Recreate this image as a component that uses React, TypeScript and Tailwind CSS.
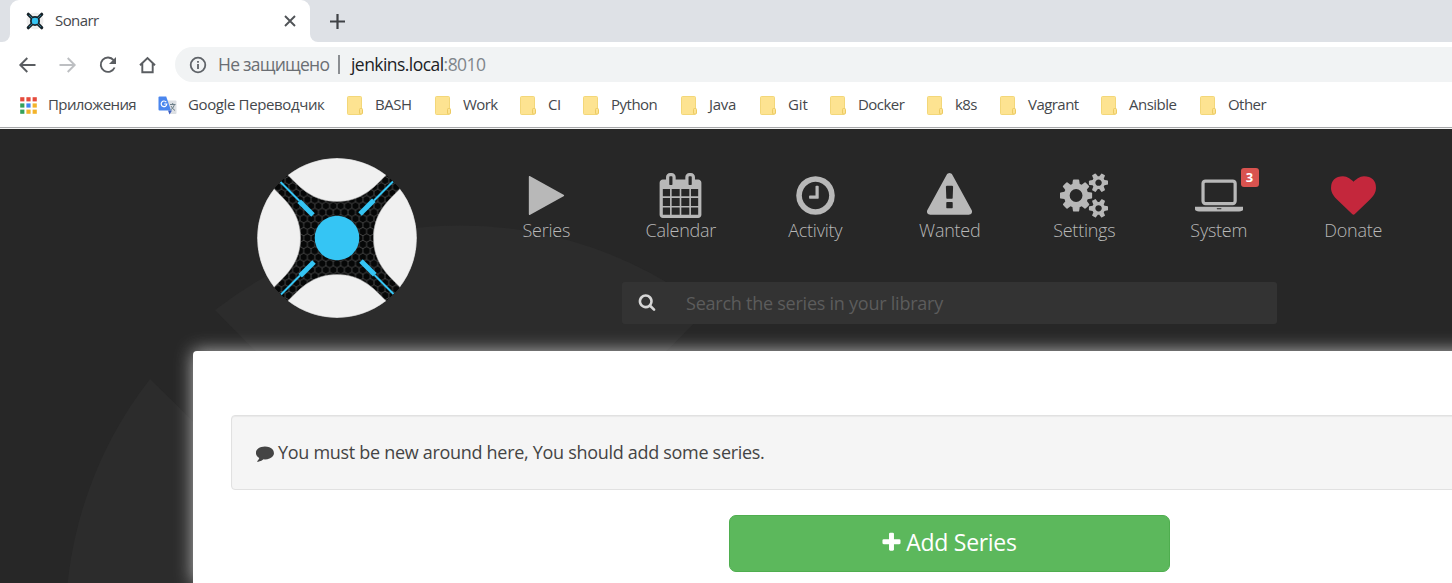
import React from "react";

const PATHS = {
  play: "M1576 927l-1328 738q-23 13-39.5 3t-16.5-36v-1472q0-26 16.5-36t39.5 3l1328 738q23 13 23 31t-23 31z",
  calendar:
    "M192 1664h288v-288h-288v288zm352 0h320v-288h-320v288zm-352-352h288v-320h-288v320zm352 0h320v-320h-320v320zm-352-384h288v-288h-288v288zm736 736h320v-288h-320v288zm-384-736h320v-288h-320v288zm768 736h288v-288h-288v288zm-384-352h320v-320h-320v320zm-352-864v-288q0-13-9.5-22.5t-22.5-9.5h-64q-13 0-22.5 9.5t-9.5 22.5v288q0 13 9.5 22.5t22.5 9.5h64q13 0 22.5-9.5t9.5-22.5zm736 864h288v-320h-288v320zm-384-384h320v-288h-320v288zm384 0h288v-288h-288v288zm32-480v-288q0-13-9.5-22.5t-22.5-9.5h-64q-13 0-22.5 9.5t-9.5 22.5v288q0 13 9.5 22.5t22.5 9.5h64q13 0 22.5-9.5t9.5-22.5zm384-64v1280q0 52-38 90t-90 38h-1408q-52 0-90-38t-38-90v-1280q0-52 38-90t90-38h128v-96q0-66 47-113t113-47h64q66 0 113 47t47 113v96h384v-96q0-66 47-113t113-47h64q66 0 113 47t47 113v96h128q52 0 90 38t38 90z",
  clock:
    "M1024 544v448q0 14-9 23t-23 9h-320q-14 0-23-9t-9-23v-64q0-14 9-23t23-9h224v-352q0-14 9-23t23-9h64q14 0 23 9t9 23zm416 352q0-148-73-273t-198-198-273-73-273 73-198 198-73 273 73 273 198 198 273 73 273-73 198-198 73-273zm224 0q0 209-103 385.5t-279.5 279.5-385.5 103-385.5-103-279.5-279.5-103-385.5 103-385.5 279.5-279.5 385.5-103 385.5 103 279.5 279.5 103 385.5z",
  warning:
    "M1024 1375v-190q0-14-9.5-23.5t-22.5-9.5h-192q-13 0-22.5 9.5t-9.5 23.5v190q0 14 9.5 23.5t22.5 9.5h192q13 0 22.5-9.5t9.5-23.5zm-2-374l18-459q0-12-10-19-13-11-24-11h-220q-11 0-24 11-10 7-10 21l17 457q0 10 10 16.5t24 6.5h185q14 0 23.5-6.5t10.5-16.5zm-14-934l768 1408q35 63-2 126-17 29-46.5 46t-63.5 17h-1536q-34 0-63.5-17t-46.5-46q-37-63-2-126l768-1408q17-31 47-49t65-18 65 18 47 49z",
  cogs:
    "M896 896q0-106-75-181t-181-75-181 75-75 181 75 181 181 75 181-75 75-181zm768 512q0-52-38-90t-90-38-90 38-38 90q0 53 37.5 90.5t90.5 37.5 90.5-37.5 37.5-90.5zm0-1024q0-52-38-90t-90-38-90 38-38 90q0 53 37.5 90.5t90.5 37.5 90.5-37.5 37.5-90.5zm-384 421v185q0 10-7 19.5t-16 10.5l-155 24q-11 35-32 76 34 48 90 115 7 11 7 20 0 12-7 19-23 30-82.5 89.5t-78.5 59.5q-11 0-21-7l-115-90q-37 19-77 31-11 108-23 155-7 24-30 24h-186q-11 0-20-7.5t-10-17.5l-23-153q-34-10-75-31l-118 89q-7 7-20 7-11 0-21-8-144-133-144-160 0-9 7-19 10-14 41-53t47-61q-23-44-35-82l-152-24q-10-1-17-9.5t-7-19.5v-185q0-10 7-19.5t16-10.5l155-24q11-35 32-76-34-48-90-115-7-11-7-20 0-12 7-20 22-30 82-89t79-59q11 0 21 7l115 90q34-18 77-32 11-108 23-154 7-24 30-24h186q11 0 20 7.5t10 17.5l23 153q34 10 75 31l118-89q8-7 20-7 11 0 21 8 144 133 144 160 0 8-7 19-12 16-42 54t-45 60q23 48 34 82l152 23q10 2 17 10.5t7 19.5zm640 533v140q0 16-149 31-12 27-30 52 51 113 51 138 0 4-4 7-122 71-124 71-8 0-46-47t-52-68q-20 2-30 2t-30-2q-14 21-52 68t-46 47q-2 0-124-71-4-3-4-7 0-25 51-138-18-25-30-52-149-15-149-31v-140q0-16 149-31 13-29 30-52-51-113-51-138 0-4 4-7 4-2 35-20t59-34 30-16q8 0 46 46.5t52 67.5q20-2 30-2t30 2q51-71 92-112l6-2q4 0 124 70 4 3 4 7 0 25-51 138 17 23 30 52 149 15 149 31zm0-1024v140q0 16-149 31-12 27-30 52 51 113 51 138 0 4-4 7-122 71-124 71-8 0-46-47t-52-68q-20 2-30 2t-30-2q-14 21-52 68t-46 47q-2 0-124-71-4-3-4-7 0-25 51-138-18-25-30-52-149-15-149-31v-140q0-16 149-31 13-29 30-52-51-113-51-138 0-4 4-7 4-2 35-20t59-34 30-16q8 0 46 46.5t52 67.5q20-2 30-2t30 2q51-71 92-112l6-2q4 0 124 70 4 3 4 7 0 25-51 138 17 23 30 52 149 15 149 31z",
  laptop:
    "M416 1280q-66 0-113-47t-47-113v-704q0-66 47-113t113-47h1088q66 0 113 47t47 113v704q0 66-47 113t-113 47h-1088zm-32-864v704q0 13 9.5 22.5t22.5 9.5h1088q13 0 22.5-9.5t9.5-22.5v-704q0-13-9.5-22.5t-22.5-9.5h-1088q-13 0-22.5 9.5t-9.5 22.5zm1376 928h160v96q0 40-47 68t-113 28h-1600q-66 0-113-28t-47-68v-96h1760zm-720 96q16 0 16-16t-16-16h-160q-16 0-16 16t16 16h160z",
  heart:
    "M896 1664q-26 0-44-18l-624-602q-10-8-27.5-26t-55.5-65.5-68-97.5-53.5-121-23.5-138q0-220 127-344t351-124q62 0 126.5 21.5t120 58 95.5 68.5 76 68q36-36 76-68t95.5-68.5 120-58 126.5-21.5q224 0 351 124t127 344q0 221-229 450l-623 600q-18 18-44 18z",
  comment:
    "M1792 896q0 174-120 321.5t-326 233-450 85.5q-70 0-145-8-198 175-460 225-49 14-128 24-17 2-30.5-9t-17.5-29v-1q-3-4-.5-12t2-10 4.5-9.5l6-9 7-8.5 8-9q8-9 31-34.5t34.5-38 31-39.5 32.5-51 27-59 26-76q-157-89-247.5-220t-90.5-281q0-130 71-248.5t191-204.5 286-136.5 348-50.5q244 0 450 85.5t326 233 120 321.5z",
  plus: "M1600 736v192q0 40-28 68t-68 28h-416v416q0 40-28 68t-68 28h-192q-40 0-68-28t-28-68v-416h-416q-40 0-68-28t-28-68v-192q0-40 28-68t68-28h416v-416q0-40 28-68t68-28h192q40 0 68 28t28 68v416h416q40 0 68 28t28 68z",
  search:
    "M1216 832q0-185-131.5-316.5t-316.5-131.5-316.5 131.5-131.5 316.5 131.5 316.5 316.5 131.5 316.5-131.5 131.5-316.5zm512 832q0 52-38 90t-90 38q-54 0-90-38l-343-342q-179 124-399 124-143 0-273.5-55.5t-225-150-150-225-55.5-273.5 55.5-273.5 150-225 225-150 273.5-55.5 273.5 55.5 225 150 150 225 55.5 273.5q0 220-124 399l343 343q37 37 37 90z",
};

type IconName = keyof typeof PATHS;

function Icon({ name, className, wide = false }: { name: IconName; className: string; wide?: boolean }) {
  return (
    <svg viewBox={wide ? "0 0 1920 1792" : "0 0 1792 1792"} fill="currentColor" className={className}>
      <path d={PATHS[name]} />
    </svg>
  );
}

const LENS = "M-49.2 -63C-36 -49.5 -24 -36.5 0 -36.5C24 -36.5 36 -49.5 49.2 -63A80 80 0 0 0 -49.2 -63Z";
const TURNS = [0, 90, 180, 270];

function Logo() {
  return (
    <svg viewBox="-80 -80 160 160" className="h-40 w-40">
      <defs>
        <pattern id="hex" width="7.4" height="12.8" patternUnits="userSpaceOnUse">
          <rect width="7.4" height="12.8" fill="#060707" />
          <path
            d="M3.7 0V2.2L0 4.3V8.5L3.7 10.6V12.8M3.7 2.2L7.4 4.3V8.5L3.7 10.6"
            fill="none"
            stroke="#474747"
            strokeWidth="0.9"
          />
        </pattern>
        <clipPath id="disc">
          <circle r="80" />
        </clipPath>
      </defs>
      <g clipPath="url(#disc)">
        <circle r="80" fill="url(#hex)" />
        {TURNS.map((t) => (
          <g key={t} transform={`rotate(${t})`}>
            <path d={LENS} fill="#f0f0f0" stroke="#a8a8a8" strokeWidth="0.6" />
            <path d="M-56.5 -56L-37.5 -37" stroke="#35c5f4" strokeWidth="2" />
            <path d="M-37.8 -36.8L-24 -23" stroke="#35c5f4" strokeWidth="5" />
          </g>
        ))}
        <circle r="22.3" fill="#35c5f4" />
      </g>
    </svg>
  );
}

function Favicon() {
  return (
    <svg viewBox="-9 -9 18 18" className="h-[18px] w-[18px]">
      <circle r="8.5" fill="#eeeeee" />
      <path d="M-6.7 -6.7L6.7 6.7M6.7 -6.7L-6.7 6.7" stroke="#17232a" strokeWidth="3.2" strokeLinecap="round" />
      <circle r="5" fill="#17232a" />
      <path d="M-6 -6L6 6M6 -6L-6 6" stroke="#2c86a5" strokeWidth="0.8" />
      <circle r="3.2" fill="#35c5f4" />
    </svg>
  );
}

function TranslateIcon() {
  return (
    <svg viewBox="0 0 19 19" className="h-[19px] w-[19px]">
      <path d="M7 4.5H17.5Q18.5 4.5 18.5 5.5V17Q18.5 18 17.5 18H12Z" fill="#dcdfe3" />
      <path d="M10 14.5H14L11.5 18.5Z" fill="#3a5bc0" />
      <path d="M1.5 0.5H8.2L13 14.5H1.5Q0.5 14.5 0.5 13.5V1.5Q0.5 0.5 1.5 0.5Z" fill="#4a86ee" />
      <path d="M8.3 6.2A2.8 2.8 0 1 0 8.8 8H6.2" fill="none" stroke="#fff" strokeWidth="1.2" />
      <path d="M12 8.5H17.5M14.7 7V8.5M16.5 8.5Q15.5 12.5 12.5 14M13 10Q14.5 13 17 14.5" fill="none" stroke="#6d7f88" strokeWidth="1" />
    </svg>
  );
}

const APP_DOTS = [
  "#e54b3c", "#e54b3c", "#e54b3c",
  "#35a15a", "#4285f4", "#f3b32a",
  "#35a15a", "#f3b32a", "#f3b32a",
];

function AppsIcon() {
  return (
    <svg viewBox="0 0 17 17" className="h-[17px] w-[17px]">
      {APP_DOTS.map((c, i) => (
        <rect key={i} x={(i % 3) * 6.2 + 0.2} y={Math.floor(i / 3) * 6.2 + 0.2} width="4.2" height="4.2" fill={c} />
      ))}
    </svg>
  );
}

function FolderIcon() {
  return (
    <svg viewBox="0 0 17 19" className="h-[19px] w-[17px] shrink-0">
      <path d="M1.5 0.5H13.5Q14.5 0.5 14.5 1.5V17.5Q14.5 18.5 13.5 18.5H1.5Q0.5 18.5 0.5 17.5V1.5Q0.5 0.5 1.5 0.5Z" fill="#fde391" stroke="#f3d779" />
      <rect x="12.5" y="12.5" width="3" height="5.5" rx="1" fill="#fde391" stroke="#ecca62" />
    </svg>
  );
}

const BOOKMARKS = [
  { label: "BASH", box: "w-[88px]", text: "tracking-[-0.5px]" },
  { label: "Work", box: "w-[85px]", text: "tracking-[-0.55px]" },
  { label: "CI", box: "w-[63px]", text: "tracking-[-0.5px]" },
  { label: "Python", box: "w-[98px]", text: "tracking-[-0.5px]" },
  { label: "Java", box: "w-[79px]", text: "tracking-[-0.3px]" },
  { label: "Git", box: "w-[70px]", text: "tracking-[-0.1px]" },
  { label: "Docker", box: "w-[97px]", text: "tracking-[-0.55px]" },
  { label: "k8s", box: "w-[73px]", text: "tracking-[-0.6px]" },
  { label: "Vagrant", box: "w-[101px]", text: "tracking-[-0.55px]" },
  { label: "Ansible", box: "w-[99px]", text: "tracking-[-0.5px]" },
  { label: "Other", box: "w-[80px]", text: "tracking-[-0.55px]" },
];

const NAV: { label: string; icon: IconName; wide?: boolean; badge?: string; color?: string }[] = [
  { label: "Series", icon: "play" },
  { label: "Calendar", icon: "calendar" },
  { label: "Activity", icon: "clock" },
  { label: "Wanted", icon: "warning" },
  { label: "Settings", icon: "cogs", wide: true },
  { label: "System", icon: "laptop", wide: true, badge: "3" },
  { label: "Donate", icon: "heart", color: "text-[#c4273c]" },
];

function Browser() {
  return (
    <header className="flex h-[129px] flex-col bg-white text-[#45484c]">
      <div className="flex h-[42px] bg-[#dee1e6]">
        <div className="flex w-[10px] bg-white">
          <div className="w-full rounded-br-[8px] bg-[#dee1e6]" />
        </div>
        <div className="flex w-[300px] items-center rounded-t-[9px] bg-white pl-4 pr-[14px]">
          <Favicon />
          <span className="-mt-0.5 ml-[11px] grow text-[15px] tracking-[-0.6px]">Sonarr</span>
          <svg viewBox="0 0 12 12" className="h-3 w-3" stroke="#505357" strokeWidth="1.9">
            <path d="M1 1L11 11M11 1L1 11" />
          </svg>
        </div>
        <div className="flex grow bg-white">
          <div className="flex grow items-center rounded-bl-[8px] bg-[#dee1e6] pl-5">
            <svg viewBox="0 0 15 15" className="h-[15px] w-[15px]" stroke="#3f4246" strokeWidth="2.2">
              <path d="M7.5 0V15M0 7.5H15" />
            </svg>
          </div>
        </div>
      </div>
      <div className="flex h-[45px] items-center">
        <svg viewBox="0 0 140 20" className="ml-[18px] h-5 w-[140px]" fill="none" stroke="#5a5d61" strokeWidth="1.9">
          <path d="M17.5 10H3M9.3 3L2.3 10L9.3 17" />
          <path d="M41.5 10H56M49.7 3L56.7 10L49.7 17" stroke="#bdbfc2" />
          <path d="M95.6 5.2A7.2 7.2 0 1 0 96.6 12.5" />
          <path d="M98 2V9H91Z" fill="#5a5d61" stroke="none" />
          <path d="M122 10.2L129.5 3L137 10.2M124.3 8.5V17.2H134.7V8.5" />
        </svg>
        <div className="ml-[17px] flex h-[35px] grow items-center rounded-l-full bg-[#f1f3f4] pl-[13.5px] text-[17.5px]">
          <svg viewBox="0 0 18 18" className="h-[18px] w-[18px]" fill="none" stroke="#5f6368" strokeWidth="1.8">
            <circle cx="9" cy="9" r="7.3" />
            <path d="M9 8V13M9 5V6.8" />
          </svg>
          <span className="ml-[11.5px] w-[120px] whitespace-nowrap tracking-[-0.75px] text-[#6a6e73]">Не защищено</span>
          <div className="h-[19px] w-[2px] bg-[#8b8e92]" />
          <span className="ml-[11px] tracking-[-0.55px] text-[#202124]">
            jenkins.local<span className="text-[#80868b]">:8010</span>
          </span>
        </div>
      </div>
      <div className="flex h-[40px] items-center pb-[3px] text-[15px]">
        <div className="flex w-[158px] items-center pl-5">
          <AppsIcon />
          <span className="-mt-0.5 ml-[11px] tracking-[-0.6px]">Приложения</span>
        </div>
        <div className="flex w-[189px] items-center whitespace-nowrap">
          <TranslateIcon />
          <span className="-mt-0.5 ml-[11px] tracking-[-0.37px]">Google Переводчик</span>
        </div>
        {BOOKMARKS.map((b) => (
          <div key={b.label} className={`flex shrink-0 items-center ${b.box}`}>
            <FolderIcon />
            <span className={`-mt-0.5 ml-[11px] whitespace-nowrap ${b.text}`}>{b.label}</span>
          </div>
        ))}
      </div>
      <div className="h-px bg-[#a6a7a9]" />
      <div className="h-px bg-[#f4f4f4]" />
    </header>
  );
}

export default function App() {
  return (
    <div className="flex h-[583px] w-[1452px] flex-col overflow-hidden font-['Open_Sans','Noto_Sans',sans-serif]">
      <Browser />
      <main className="relative isolate flex grow flex-col overflow-hidden bg-[#272727]">
        <svg viewBox="0 129 1452 454" className="absolute inset-0 -z-10 h-full w-full" fill="#2c2c2c">
          {TURNS.map((t) => (
            <path key={t} d={LENS} transform={`translate(${t === 270 ? 465 : 461} 625) scale(5) rotate(${t})`} />
          ))}
        </svg>
        <div className="flex h-[222px] shrink-0">
          <div className="ml-[257px] mt-[29px] h-40 w-40 shrink-0">
            <Logo />
          </div>
          <div className="ml-[62px] flex flex-col">
            <nav className="mt-[44px] flex h-[109px]">
              {NAV.map((n) => (
                <a key={n.label} className="relative flex w-[134.5px] flex-col items-center text-[#b8b8b8]">
                  <Icon
                    name={n.icon}
                    wide={n.wide}
                    className={`-mt-[0.5px] h-[45px] ${n.wide ? "w-[48.2px]" : "w-[45px]"} ${n.color ?? ""}`}
                  />
                  <span className="-mt-[0.5px] text-[18px] leading-[26px] font-light tracking-[-0.25px]">{n.label}</span>
                  {n.badge && (
                    <span className="absolute -top-[5px] left-[89px] h-[19px] w-[18px] rounded-[3px] bg-[#d9534f] text-center text-[13px] leading-[18px] font-bold text-white">
                      {n.badge}
                    </span>
                  )}
                </a>
              ))}
            </nav>
            <div className="ml-[143px] flex h-[42px] w-[655px] rounded-[3px] bg-[#333333]">
              <div className="flex w-12 items-center pb-[2px] pl-4 text-[#d6d6d6]">
                <Icon name="search" className="h-[18px] w-[18px]" />
              </div>
              <div className="flex grow items-center pl-4 text-[18px] tracking-[-0.24px] text-[#5c5c5c]">
                Search the series in your library
              </div>
            </div>
          </div>
        </div>
        <section className="ml-[193px] flex w-[1512px] grow flex-col rounded-tl-[4px] bg-white pl-[38px] shadow-[0_0_18px_0_#b8b8b8]">
          <div className="mt-[64px] flex h-[75px] items-center rounded-[4px] border border-[#e1e1e1] bg-[#f5f5f5] pl-6 text-[#444444] shadow-[inset_0_1px_1px_rgba(0,0,0,0.05)]">
            <Icon name="comment" className="h-[18px] w-[18px]" />
            <span className="ml-1 text-[18px] tracking-[-0.3px]">You must be new around here, You should add some series.</span>
          </div>
          <button className="ml-[498px] mt-[25px] flex h-[57px] w-[441px] items-center justify-center rounded-[7px] border border-[#4fae4f] bg-[#5cb85c] pb-[2px] pr-[2px] text-white">
            <Icon name="plus" className="h-[23px] w-[23px]" />
            <span className="ml-[3px] text-[23px] tracking-[-0.3px]">Add Series</span>
          </button>
        </section>
      </main>
    </div>
  );
}
